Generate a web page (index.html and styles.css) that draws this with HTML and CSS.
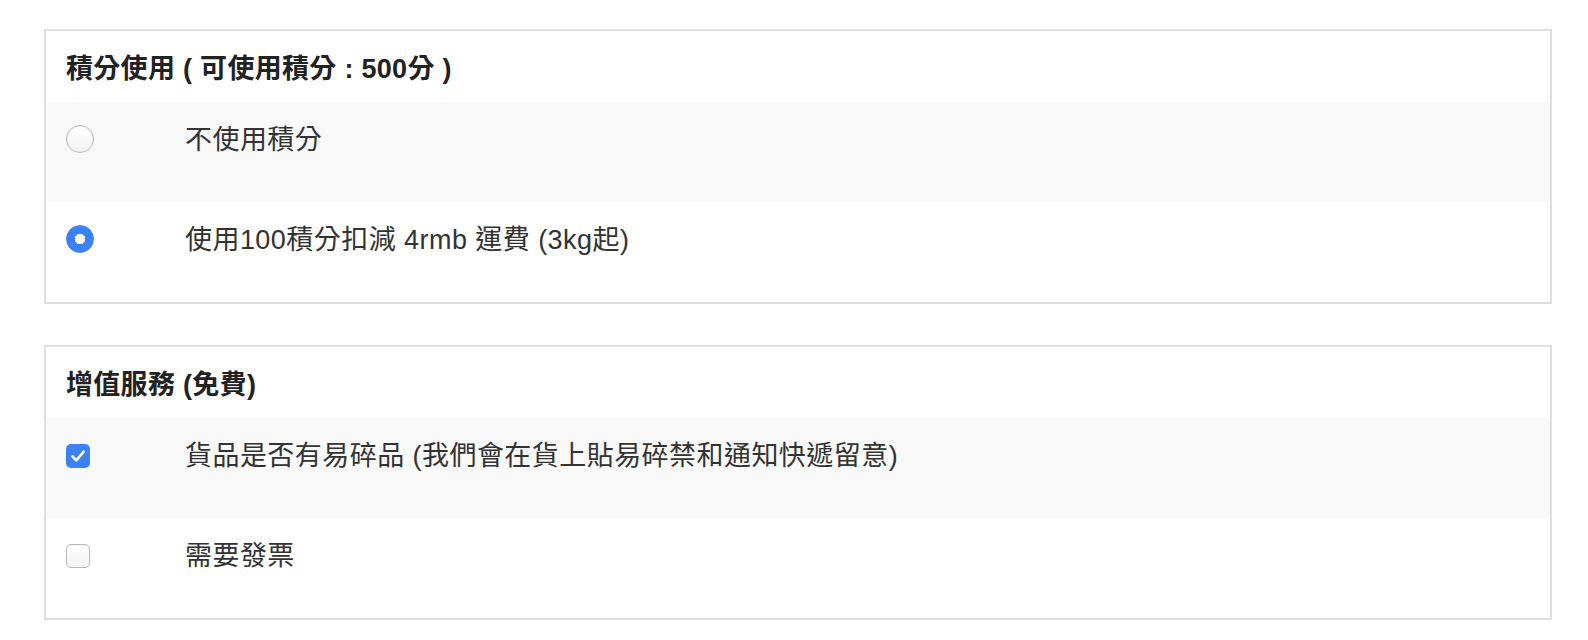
FILE: index.html
```html
<!DOCTYPE html>
<html lang="zh-Hant">
<head>
    <meta charset="UTF-8" />
    <meta name="viewport" content="width=device-width, initial-scale=1.0"/>
    <title>積分及增值服務</title>
    <link rel="stylesheet" href="styles.css">
</head>
<body>

    <div class="page">
        <!-- Points -->
        <section class="panel">
            <div class="panel-head">積分使用 ( 可使用積分 : 500分 )</div>

            <label class="row stripe">
                <span class="ctl"><span class="radio"></span></span>
                <span class="text">不使用積分</span>
            </label>

            <label class="row">
                <span class="ctl"><span class="radio on"></span></span>
                <span class="text">使用100積分扣減 4rmb 運費 (3kg起)</span>
            </label>
        </section>

        <!-- Extra services -->
        <section class="panel">
            <div class="panel-head">增值服務 (免費)</div>

            <label class="row stripe">
                <span class="ctl">
                    <span class="check on">
                        <svg viewBox="0 0 24 24" width="24" height="24"><path d="M6.5 12.5l3.8 3.8 7.4-8.6" fill="none" stroke="#fff" stroke-width="2.6" stroke-linecap="round" stroke-linejoin="round"/></svg>
                    </span>
                </span>
                <span class="text">貨品是否有易碎品 (我們會在貨上貼易碎禁和通知快遞留意)</span>
            </label>

            <label class="row">
                <span class="ctl"><span class="check"></span></span>
                <span class="text">需要發票</span>
            </label>
        </section>
    </div>

</body>
</html>
```

FILE: styles.css
```css
/* colours */
:root {
    --border: #dedede;
    --stripe: #f9f9f9;
    --text: #333;
    --blue: #3b82f6;
}

* {
    box-sizing: border-box;
}

body {
    margin: 0;
    background: #fff;
    color: var(--text);
    font-family: "Liberation Sans", "Noto Sans CJK TC", sans-serif;
    font-size: 27px;
}

.page {
    padding: 29px 36px 0 44px;
}

/* panel box */
.panel {
    border: 2px solid var(--border);
    margin-bottom: 41px;
}

.panel:last-child {
    margin-bottom: 0;
}

.panel-head {
    height: 71px;
    display: flex;
    align-items: center;
    padding: 0 20px;
    font-weight: bold;
    color: #222;
    letter-spacing: 0.3px;
}

/* option rows */
.row {
    display: grid;
    grid-template-columns: 119px 1fr;
    align-items: start;
    height: 100px;
    padding: 24px 20px 0;
    cursor: pointer;
}

.stripe {
    background: var(--stripe);
}

.text {
    line-height: 28px;
    letter-spacing: 0.45px;
}

.ctl {
    display: flex;
}

/* radio */
.radio {
    width: 28px;
    height: 28px;
    margin-top: -1px;
    border-radius: 50%;
    border: 1px solid #b9b9b9;
    background: linear-gradient(#fff, #f3f3f3);
    box-shadow: inset 0 1px 1px rgba(0, 0, 0, 0.06);
}

.radio.on {
    border-color: var(--blue);
    background: radial-gradient(circle, #fff 0 5px, var(--blue) 5.5px);
    box-shadow: none;
}

/* checkbox */
.check {
    width: 24px;
    height: 24px;
    margin-top: 2px;
    border-radius: 5px;
    border: 1px solid #b9b9b9;
    background: linear-gradient(#fff, #f3f3f3);
    box-shadow: inset 0 1px 1px rgba(0, 0, 0, 0.05);
    display: flex;
}

.check.on {
    border: none;
    background: var(--blue);
    box-shadow: none;
}
```
